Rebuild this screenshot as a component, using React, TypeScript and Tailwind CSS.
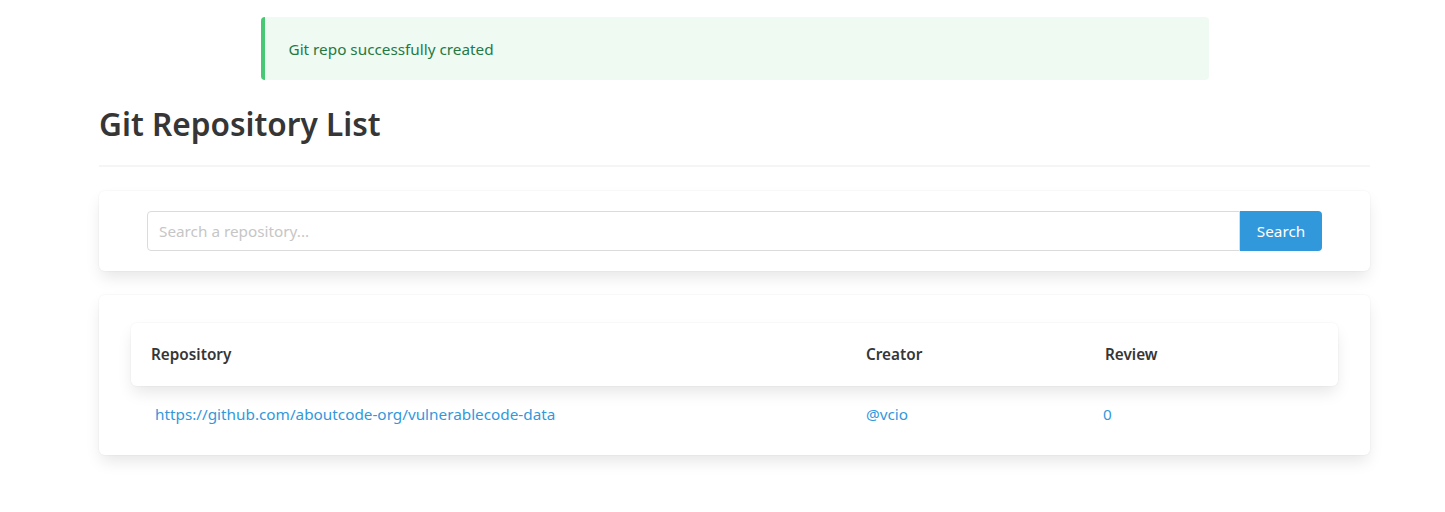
import React from "react";

const boxShadow =
  "shadow-[0_8px_16px_-2px_rgba(10,10,10,0.1),0_0_0_1px_rgba(10,10,10,0.02)]";

const App: React.FC = () => (
  <div
    className="min-h-[512px] bg-white pt-[17px] text-[#4a4a4a]"
    style={{ fontFamily: '"Noto Sans", "Open Sans", sans-serif' }}
  >
    <div className="ml-[99px] w-[1271px]">
      <div className="mx-auto flex h-[63px] w-[948px] items-center rounded border-l-4 border-[#48c774] bg-[#effaf3] pl-6 pt-[1px] text-[15.3px] text-[#257942]">
        Git repo successfully created
      </div>

      <h1 className="mt-[23px] text-[31.6px] font-semibold leading-[42px] text-[#363636]">
        Git Repository List
      </h1>
      <hr className="mt-[20px] h-[2px] border-0 bg-[#f5f5f5]" />

      <div className={`mt-[24px] rounded-md bg-white px-[48px] py-5 ${boxShadow}`}>
        <div className="flex h-[40px]">
          <input
            className="min-w-0 flex-1 rounded-l border border-[#dbdbdb] px-[11px] text-[15.3px] text-[#363636] outline-none placeholder:text-[#c6c6c6]"
            placeholder="Search a repository..."
          />
          <button className="w-[82px] rounded-r bg-[#3298dc] text-[15.3px] text-white">
            Search
          </button>
        </div>
      </div>

      <div className={`mt-[24px] rounded-md bg-white px-8 pt-[28px] pb-[13px] ${boxShadow}`}>
        <div className={`flex h-[63px] items-center rounded-md bg-white px-5 text-[15.3px] font-semibold text-[#363636] ${boxShadow}`}>
          <div className="w-[715px]">Repository</div>
          <div className="w-[239px]">Creator</div>
          <div>Review</div>
        </div>
        <div className="flex h-[56px] items-center pl-6 text-[15.3px] text-[#3298dc]">
          <a className="w-[711px]" href="#">
            https://github.com/aboutcode-org/vulnerablecode-data
          </a>
          <a className="w-[237px]" href="#">
            @vcio
          </a>
          <a href="#">0</a>
        </div>
      </div>
    </div>
  </div>
);

export default App;
